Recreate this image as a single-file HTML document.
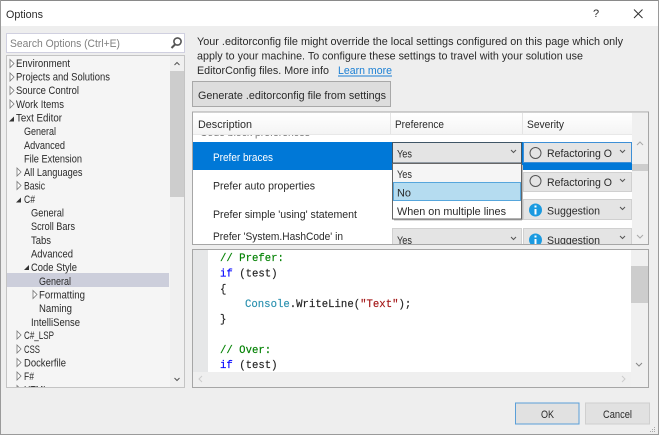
<!DOCTYPE html>
<html><head><meta charset="utf-8"><style>
html,body{margin:0;padding:0;width:659px;height:435px;overflow:hidden;background:#eee}
svg{display:block}
text{font-family:"Liberation Sans",sans-serif;font-size:11.3px;fill:#2a2a2a}
.m{font-family:"Liberation Mono",monospace;font-size:10.67px;fill:#222;stroke:#222;stroke-width:.15}
.c{fill:none;stroke:#555;stroke-width:1}
.t{fill:#fff;stroke:#777;stroke-width:.8}
</style></head><body>
<svg width="659" height="435" viewBox="0 0 659 435" xmlns="http://www.w3.org/2000/svg">
<defs>
<clipPath id="g"><rect x="193" y="113" width="439" height="131"/></clipPath>
<clipPath id="tr"><rect x="7" y="56" width="163" height="331"/></clipPath>
<linearGradient id="h" x1="0" y1="0" x2="0" y2="1"><stop offset="0" stop-color="#fff"/><stop offset="1" stop-color="#f4f4f4"/></linearGradient>
</defs>
<rect width="659" height="435" fill="#eeeeee"/>
<rect width="659" height="26" fill="#fff"/>
<rect width="659" height="1" fill="#8a8a8a"/>
<rect y="0" width="1" height="435" fill="#9a9a9a"/>
<rect x="658" y="0" width="1" height="435" fill="#9a9a9a"/>
<rect y="434" width="659" height="1" fill="#9a9a9a"/>
<text x="6" y="18" lengthAdjust="spacingAndGlyphs" textLength="37">Options</text>
<text x="593" y="17" style="font-size:11px">?</text>
<path d="M634 9.5 L642.5 18 M642.5 9.5 L634 18" stroke="#333" stroke-width="1" fill="none"/>

<!-- search -->
<rect x="6.5" y="33.5" width="178" height="19" fill="#fff" stroke="#d0d0e0"/>
<text x="10" y="47" lengthAdjust="spacingAndGlyphs" textLength="110" style="fill:#808080">Search Options (Ctrl+E)</text>
<circle cx="177.5" cy="41.5" r="3.6" fill="none" stroke="#555" stroke-width="1.6"/>
<path d="M175 44.5 L171.5 48" stroke="#555" stroke-width="2" fill="none"/>

<!-- tree -->
<rect x="6.5" y="55.5" width="178" height="332" fill="#f5f5f5" stroke="#c4c4c4"/>
<rect x="170" y="56" width="14" height="331" fill="#f0f0f0"/>
<rect x="170" y="71" width="14" height="126" fill="#cdcdcd"/>
<path d="M174.5 65 L177 62.5 L179.5 65" fill="none" stroke="#555"/>
<path d="M174.5 378 L177 380.5 L179.5 378" fill="none" stroke="#555"/>
<rect x="7" y="273" width="162" height="14" fill="#cccedb"/>
<g clip-path="url(#tr)">
<path class="t" d="M10 59.5 L14 63.5 L10 67.5Z"/><text x="16" y="67" lengthAdjust="spacingAndGlyphs" textLength="54">Environment</text>
<path class="t" d="M10 73 L14 77 L10 81Z"/><text x="16" y="80.5" lengthAdjust="spacingAndGlyphs" textLength="94">Projects and Solutions</text>
<path class="t" d="M10 86.5 L14 90.5 L10 94.5Z"/><text x="16" y="94" lengthAdjust="spacingAndGlyphs" textLength="63">Source Control</text>
<path class="t" d="M10 100 L14 104 L10 108Z"/><text x="16" y="108" lengthAdjust="spacingAndGlyphs" textLength="48">Work Items</text>
<path d="M9 121.5 L14 121.5 L14 116.5Z" fill="#333"/><text x="16" y="121.5" lengthAdjust="spacingAndGlyphs" textLength="46">Text Editor</text>
<text x="24" y="135" lengthAdjust="spacingAndGlyphs" textLength="32">General</text>
<text x="24" y="149" lengthAdjust="spacingAndGlyphs" textLength="41">Advanced</text>
<text x="24" y="162.5" lengthAdjust="spacingAndGlyphs" textLength="58">File Extension</text>
<path class="t" d="M17 168 L21 172 L17 176Z"/><text x="24" y="176" lengthAdjust="spacingAndGlyphs" textLength="58.5">All Languages</text>
<path class="t" d="M17 181.5 L21 185.5 L17 189.5Z"/><text x="24" y="189.5" lengthAdjust="spacingAndGlyphs" textLength="21">Basic</text>
<path d="M16 202.5 L21 202.5 L21 197.5Z" fill="#333"/><text x="24" y="203" lengthAdjust="spacingAndGlyphs" textLength="11">C#</text>
<text x="31" y="216.5" lengthAdjust="spacingAndGlyphs" textLength="33">General</text>
<text x="31" y="230" lengthAdjust="spacingAndGlyphs" textLength="44">Scroll Bars</text>
<text x="31" y="244" lengthAdjust="spacingAndGlyphs" textLength="20">Tabs</text>
<text x="31" y="257.5" lengthAdjust="spacingAndGlyphs" textLength="42">Advanced</text>
<path d="M24 270 L29 270 L29 265Z" fill="#333"/><text x="31" y="271" lengthAdjust="spacingAndGlyphs" textLength="46">Code Style</text>
<text x="39" y="285" lengthAdjust="spacingAndGlyphs" textLength="32">General</text>
<path class="t" d="M33 290.5 L37 294.5 L33 298.5Z"/><text x="39" y="298.5" lengthAdjust="spacingAndGlyphs" textLength="46">Formatting</text>
<text x="39" y="312" lengthAdjust="spacingAndGlyphs" textLength="33">Naming</text>
<text x="31" y="326" lengthAdjust="spacingAndGlyphs" textLength="49">IntelliSense</text>
<path class="t" d="M17 331 L21 335 L17 339Z"/><text x="24" y="339" lengthAdjust="spacingAndGlyphs" textLength="30">C#_LSP</text>
<path class="t" d="M17 345 L21 349 L17 353Z"/><text x="24" y="353" lengthAdjust="spacingAndGlyphs" textLength="16">CSS</text>
<path class="t" d="M17 358.5 L21 362.5 L17 366.5Z"/><text x="24" y="366.5" lengthAdjust="spacingAndGlyphs" textLength="42">Dockerfile</text>
<path class="t" d="M17 372 L21 376 L17 380Z"/><text x="24" y="380" lengthAdjust="spacingAndGlyphs" textLength="10">F#</text>
<path class="t" d="M17 385.5 L21 389.5 L17 393.5Z"/><text x="24" y="393.5" lengthAdjust="spacingAndGlyphs" textLength="24">HTML</text>
</g>

<!-- top text -->
<text x="197" y="45" lengthAdjust="spacingAndGlyphs" textLength="426">Your .editorconfig file might override the local settings configured on this page which only</text>
<text x="197" y="59.5" lengthAdjust="spacingAndGlyphs" textLength="386">apply to your machine. To configure these settings to travel with your solution use</text>
<text x="197" y="74" lengthAdjust="spacingAndGlyphs" textLength="132">EditorConfig files. More info</text>
<text x="338" y="74" lengthAdjust="spacingAndGlyphs" textLength="54" style="fill:#1a7fd4">Learn more</text>
<rect x="338" y="75.5" width="54" height="1" fill="#1a7fd4"/>

<rect x="192.5" y="81.5" width="198" height="25" fill="#dddddd" stroke="#a8a8a8"/>
<text x="198" y="99" lengthAdjust="spacingAndGlyphs" textLength="188">Generate .editorconfig file from settings</text>

<!-- grid -->
<rect x="192.5" y="112" width="456" height="132.5" fill="#fff" stroke="#a6a6a6"/>
<rect x="632" y="113" width="16" height="131" fill="#f0f0f0"/>
<rect x="632" y="164" width="16" height="7" fill="#cdcdcd"/>
<path d="M637 145 L640 142 L643 145" fill="none" stroke="#aaa"/>
<path d="M637 235 L640 238 L643 235" fill="none" stroke="#aaa"/>
<g clip-path="url(#g)">
<text x="200" y="136" lengthAdjust="spacingAndGlyphs" textLength="110" style="fill:#777">Code block preferences</text>
<rect x="193" y="113" width="439" height="21" fill="url(#h)"/>
<rect x="193" y="134" width="439" height="1" fill="#e8e8e8"/>
<rect x="390" y="113" width="1" height="21" fill="#e4e4e4"/>
<rect x="522" y="113" width="1" height="21" fill="#e4e4e4"/>
<text x="198" y="128" lengthAdjust="spacingAndGlyphs" textLength="54">Description</text>
<text x="395" y="128" lengthAdjust="spacingAndGlyphs" textLength="49">Preference</text>
<text x="527" y="128" lengthAdjust="spacingAndGlyphs" textLength="37">Severity</text>

<rect x="193" y="142" width="439" height="28" fill="#0078d7"/>
<text x="213" y="161" lengthAdjust="spacingAndGlyphs" textLength="60" style="fill:#fff">Prefer braces</text>
<text x="213" y="189.5" lengthAdjust="spacingAndGlyphs" textLength="102">Prefer auto properties</text>
<text x="213" y="218" lengthAdjust="spacingAndGlyphs" textLength="144">Prefer simple 'using' statement</text>
<text x="213" y="240" lengthAdjust="spacingAndGlyphs" textLength="130">Prefer 'System.HashCode' in</text>

<!-- severity combos -->
<rect x="523.5" y="142.5" width="108" height="20" fill="#e4e4e4" stroke="#3d8fd6"/>
<circle cx="535.5" cy="153" r="5.5" fill="none" stroke="#555"/>
<text x="547" y="157" lengthAdjust="spacingAndGlyphs" textLength="65">Refactoring O</text>
<path class="c" d="M620 150 L622.5 152.5 L625 150"/>

<rect x="523.5" y="172.5" width="108" height="19" fill="#e4e4e4" stroke="#d0d0d0"/>
<circle cx="535.5" cy="181" r="5.5" fill="none" stroke="#555"/>
<text x="547" y="186" lengthAdjust="spacingAndGlyphs" textLength="65">Refactoring O</text>
<path class="c" d="M620 179 L622.5 181.5 L625 179"/>

<rect x="523.5" y="199.5" width="108" height="20" fill="#e4e4e4" stroke="#d0d0d0"/>
<circle cx="535.5" cy="210" r="6.5" fill="#1b9ae0"/>
<rect x="534.5" y="209" width="2" height="5.5" fill="#fff"/><rect x="534.5" y="205.5" width="2" height="2" fill="#fff"/>
<text x="547" y="214.5" lengthAdjust="spacingAndGlyphs" textLength="53">Suggestion</text>
<path class="c" d="M620 207 L622.5 209.5 L625 207"/>

<rect x="523.5" y="228.5" width="108" height="20" fill="#e4e4e4" stroke="#d0d0d0"/>
<circle cx="535.5" cy="240" r="6.5" fill="#1b9ae0"/>
<rect x="534.5" y="239" width="2" height="5.5" fill="#fff"/><rect x="534.5" y="235.5" width="2" height="2" fill="#fff"/>
<text x="547" y="244" lengthAdjust="spacingAndGlyphs" textLength="53">Suggestion</text>
<path class="c" d="M620 236 L622.5 238.5 L625 236"/>

<rect x="392.5" y="228.5" width="129" height="20" fill="#e4e4e4" stroke="#d0d0d0"/>
<text x="397" y="244" lengthAdjust="spacingAndGlyphs" textLength="15">Yes</text>
<path class="c" d="M511 237 L513.5 239.5 L516 237"/>

<!-- open combo -->
<rect x="392.5" y="142.5" width="129" height="20.5" fill="#e4e4e4" stroke="#3f5566"/>
<text x="397" y="157.5" lengthAdjust="spacingAndGlyphs" textLength="15">Yes</text>
<path class="c" d="M511 150 L513.5 152.5 L516 150"/>
</g>
<!-- dropdown list -->
<rect x="392.5" y="163.5" width="129" height="55.5" fill="#fff" stroke="#666"/>
<rect x="393" y="164" width="128" height="18" fill="#f5f5f5"/>
<rect x="393" y="182" width="128" height="19" fill="#b5dcf0"/>
<rect x="393.5" y="182.5" width="127" height="18" fill="none" stroke="#56a6dc"/>
<rect x="522" y="165" width="1" height="55" fill="#bbb"/>
<rect x="394" y="219.5" width="128" height="1" fill="#bbb"/>
<text x="397" y="178" lengthAdjust="spacingAndGlyphs" textLength="15">Yes</text>
<text x="397" y="196.5" lengthAdjust="spacingAndGlyphs" textLength="14">No</text>
<text x="397" y="215" lengthAdjust="spacingAndGlyphs" textLength="109">When on multiple lines</text>

<!-- code -->
<rect x="192.5" y="249.5" width="456" height="138" fill="#fff" stroke="#a6a6a6"/>
<rect x="193" y="250" width="15" height="122" fill="#e6e7e8"/>
<rect x="193" y="372" width="455" height="15" fill="#efefef"/>
<rect x="631" y="250" width="17" height="137" fill="#f0f0f0"/>
<rect x="631" y="266" width="17" height="37" fill="#cdcdcd"/>
<path d="M636 363 L639 366 L642 363" fill="none" stroke="#888"/>
<path d="M202 376 L199 379 L202 382" fill="none" stroke="#ccc"/>
<path d="M622 376 L625 379 L622 382" fill="none" stroke="#ccc"/>
<text class="m" x="220" y="261" style="fill:#008000;stroke:#008000">// Prefer:</text>
<text class="m" x="220" y="276.5"><tspan style="fill:#0000ff;stroke:#0000ff">if</tspan> (test)</text>
<text class="m" x="220" y="292">{</text>
<text class="m" x="245" y="307"><tspan style="fill:#2b91af;stroke:#2b91af">Console</tspan>.WriteLine(<tspan style="fill:#a31515;stroke:#a31515">"Text"</tspan>);</text>
<text class="m" x="220" y="322">}</text>
<text class="m" x="220" y="353" style="fill:#008000;stroke:#008000">// Over:</text>
<text class="m" x="220" y="368"><tspan style="fill:#0000ff;stroke:#0000ff">if</tspan> (test)</text>

<!-- buttons -->
<rect x="515.5" y="403" width="63.5" height="21" fill="#e1e1e1" stroke="#5a9fd8"/>
<text x="541" y="418" lengthAdjust="spacingAndGlyphs" textLength="13">OK</text>
<rect x="585.5" y="403" width="64" height="21" fill="#e1e1e1" stroke="#cfcfcf"/>
<text x="603" y="418" lengthAdjust="spacingAndGlyphs" textLength="29">Cancel</text>
<g fill="#a8a8a8"><rect x="654" y="427" width="1" height="1"/><rect x="654" y="429" width="1" height="1"/><rect x="654" y="431" width="1" height="1"/><rect x="652" y="429" width="1" height="1"/><rect x="652" y="431" width="1" height="1"/><rect x="650" y="431" width="1" height="1"/></g>
</svg>
</body></html>
